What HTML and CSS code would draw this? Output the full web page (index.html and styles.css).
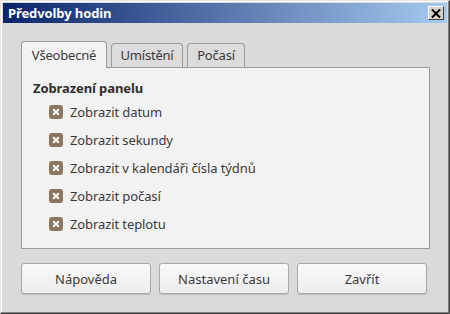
FILE: index.html
```html
<!DOCTYPE html>
<html lang="cs">
<head>
    <meta charset="UTF-8">
    <title>Předvolby hodin</title>
    <link rel="stylesheet" href="styles.css">
</head>
<body>
    <div class="window">
        <div class="titlebar">
            <span class="title">Předvolby hodin</span>
            <span class="close-btn">
                <svg width="10" height="9" viewBox="0 0 10 9"><path d="M1 0.5 L9 8.5 M9 0.5 L1 8.5" stroke="#000" stroke-width="2"/></svg>
            </span>
        </div>
        <div class="content">
            <div class="tabs">
                <div class="tab active">Všeobecné</div>
                <div class="tab tab-place">Umístění</div>
                <div class="tab tab-weather">Počasí</div>
            </div>
            <div class="panel">
                <div class="section-title">Zobrazení panelu</div>
                <div class="option"><span class="check"></span>Zobrazit datum</div>
                <div class="option"><span class="check"></span>Zobrazit sekundy</div>
                <div class="option"><span class="check"></span>Zobrazit v kalendáři čísla týdnů</div>
                <div class="option"><span class="check"></span>Zobrazit počasí</div>
                <div class="option"><span class="check"></span>Zobrazit teplotu</div>
            </div>
            <div class="buttons">
                <button class="btn">Nápověda</button>
                <button class="btn">Nastavení času</button>
                <button class="btn">Zavřít</button>
            </div>
        </div>
    </div>
</body>
</html>
```
FILE: styles.css
```css
body {
    margin: 0;
    font-family: "Noto Sans", "DejaVu Sans", sans-serif;
    font-size: 13px;
    color: #3a3a3a;
}
.window {
    width: 450px;
    height: 314px;
    box-sizing: border-box;
    background: #dadada;
    border-top: 1px solid #e4e4e4;
    border-left: 1px solid #e4e4e4;
    border-right: 1px solid #404040;
    border-bottom: 1px solid #404040;
    box-shadow: inset -1px -1px 0 #808080, inset 1px 1px 0 #ffffff;
    padding: 2px;
}
.titlebar {
    height: 20px;
    display: flex;
    align-items: center;
    justify-content: space-between;
    padding: 0 3px 0 5px;
    background: linear-gradient(to right, #0a246a, #a6caf0);
}
.title {
    color: #fff;
    font-weight: bold;
    font-size: 13px;
    letter-spacing: -0.1px;
}
.close-btn {
    width: 16px;
    height: 14px;
    box-sizing: border-box;
    background: #d4d0c8;
    border-top: 1px solid #fff;
    border-left: 1px solid #fff;
    border-right: 1px solid #404040;
    border-bottom: 1px solid #404040;
    display: flex;
    align-items: center;
    justify-content: center;
}
.content {
    padding: 18px 17px 0 18px;
}
.tabs {
    display: flex;
    align-items: flex-end;
    gap: 4px;
    height: 26px;
}
.tab {
    width: 72px;
    height: 24px;
    box-sizing: border-box;
    text-align: center;
    line-height: 22px;
    background: #dcdcdc;
    border: 1px solid #9a9a9a;
    border-bottom: none;
    border-radius: 4px 4px 0 0;
    letter-spacing: -0.2px;
}
.tab-weather {
    width: 58px;
}
.tab.active {
    width: 86px;
    height: 27px;
    line-height: 27px;
    background: #f2f2f2;
    margin-bottom: -1px;
    position: relative;
    z-index: 1;
}
.panel {
    height: 182px;
    box-sizing: border-box;
    background: #f2f2f2;
    border: 1px solid #9a9a9a;
    padding: 10px 11px;
}
.section-title {
    font-weight: bold;
    color: #2e2e2e;
    height: 20px;
    line-height: 20px;
    letter-spacing: -0.1px;
}
.option {
    display: flex;
    align-items: center;
    height: 28px;
    padding-left: 16px;
    letter-spacing: -0.1px;
}
.check {
    width: 14px;
    height: 14px;
    border-radius: 3px;
    background: #8c7560;
    margin-right: 7px;
    position: relative;
}
.check::before,
.check::after {
    content: "";
    position: absolute;
    left: 3px;
    top: 6px;
    width: 8px;
    height: 2px;
    background: #fff;
    transform: rotate(45deg);
}
.check::after {
    transform: rotate(-45deg);
}
.buttons {
    display: flex;
    gap: 8px;
    margin-top: 14px;
}
.btn {
    width: 130px;
    height: 31px;
    font-family: inherit;
    font-size: 13px;
    color: #3a3a3a;
    background: linear-gradient(#f9f9f9, #ececec);
    border: 1px solid #a8a8a8;
    border-radius: 3px;
    box-shadow: 0 1px 0 #bcbcbc;
}
```
